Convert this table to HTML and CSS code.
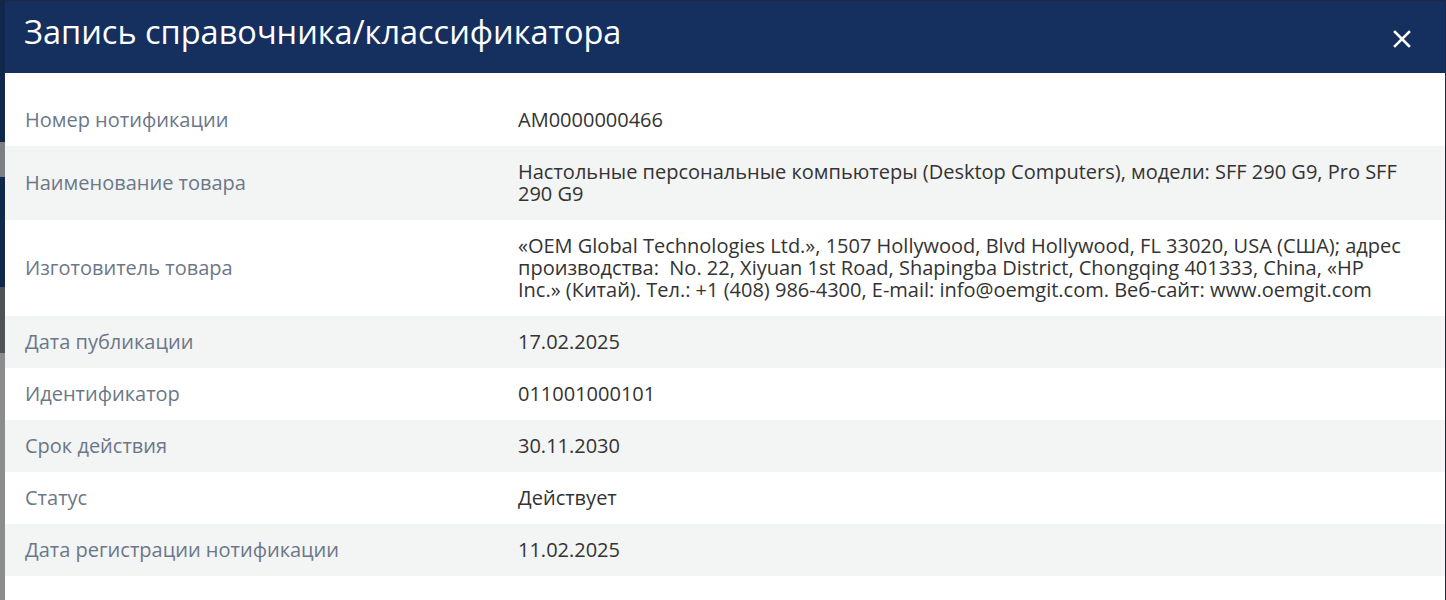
FILE: index.html
```html
<!DOCTYPE html>
<html lang="ru">
<head>
    <meta charset="utf-8">
    <title>Запись справочника/классификатора</title>
    <link rel="stylesheet" href="styles.css">
</head>
<body>
    <div class="page-behind">
        <div class="pb-navy"></div>
        <div class="pb-gray"></div>
        <div class="pb-navy pb-tall"></div>
        <div class="pb-dark"></div>
        <div class="pb-light"></div>
    </div>
    <div class="modal">
        <div class="modal-header">
            <h1 class="modal-title">Запись справочника/классификатора</h1>
            <button class="modal-close" aria-label="Закрыть">
                <svg width="18" height="18" viewBox="0 0 18 18">
                    <path d="M2 2 L16 16 M16 2 L2 16" stroke="#fff" stroke-width="2.6" stroke-linecap="square"/>
                </svg>
            </button>
        </div>
        <div class="modal-body">
            <div class="row">
                <div class="label">Номер нотификации</div>
                <div class="value">AM0000000466</div>
            </div>
            <div class="row">
                <div class="label">Наименование товара</div>
                <div class="value">Настольные персональные компьютеры (Desktop Computers), модели: SFF 290 G9, Pro SFF 290 G9</div>
            </div>
            <div class="row">
                <div class="label">Изготовитель товара</div>
                <div class="value">«OEM Global Technologies Ltd.», 1507 Hollywood, Blvd Hollywood, FL 33020, USA (США); адрес производства:&nbsp; No. 22, Xiyuan 1st Road, Shapingba District, Chongqing 401333, China, «HP Inc.» (Китай). Тел.: +1 (408) 986-4300, E-mail: info@oemgit.com. Веб-сайт: www.oemgit.com</div>
            </div>
            <div class="row">
                <div class="label">Дата публикации</div>
                <div class="value">17.02.2025</div>
            </div>
            <div class="row">
                <div class="label">Идентификатор</div>
                <div class="value">011001000101</div>
            </div>
            <div class="row">
                <div class="label">Срок действия</div>
                <div class="value">30.11.2030</div>
            </div>
            <div class="row">
                <div class="label">Статус</div>
                <div class="value">Действует</div>
            </div>
            <div class="row">
                <div class="label">Дата регистрации нотификации</div>
                <div class="value">11.02.2025</div>
            </div>
        </div>
    </div>
</body>
</html>
```

FILE: styles.css
```css
body {
    margin: 0;
    height: 600px;
    overflow: hidden;
    display: flex;
    background-color: #1b2a40;
    font-family: "Open Sans", "Noto Sans", sans-serif;
}
.page-behind {
    width: 5px;
    display: flex;
    flex-direction: column;
    flex-shrink: 0;
}
.pb-navy {
    height: 142px;
    background-color: #12284a;
}
.pb-tall {
    height: 110px;
}
.pb-gray {
    height: 35px;
    background-color: #7c7f84;
}
.pb-dark {
    height: 66px;
    background-color: #4f5357;
}
.pb-light {
    flex: 1;
    background-color: #8a8c8e;
}
.modal {
    width: 1440px;
    margin-top: 1px;
    background-color: #fff;
    flex-shrink: 0;
}
.modal-header {
    height: 72px;
    background-color: #15305f;
    display: flex;
    align-items: center;
    justify-content: space-between;
    padding: 0 34px 0 19px;
}
.modal-title {
    margin: 0;
    color: #fff;
    font-size: 32.5px;
    font-weight: 400;
    line-height: 1;
    padding-bottom: 9px;
}
.modal-close {
    background: none;
    border: none;
    padding: 0;
    cursor: pointer;
    display: flex;
    margin-top: 3px;
}
.modal-body {
    padding-top: 21px;
}
.row {
    display: grid;
    grid-template-columns: 493px 1fr;
    align-items: center;
    padding: 15px 20px 15px 20px;
    font-size: 20px;
    line-height: 22px;
}
.row:nth-child(even) {
    background-color: #f3f4f4;
}
.label {
    color: #6c7788;
}
.value {
    color: #333;
    padding-right: 18px;
}
```
